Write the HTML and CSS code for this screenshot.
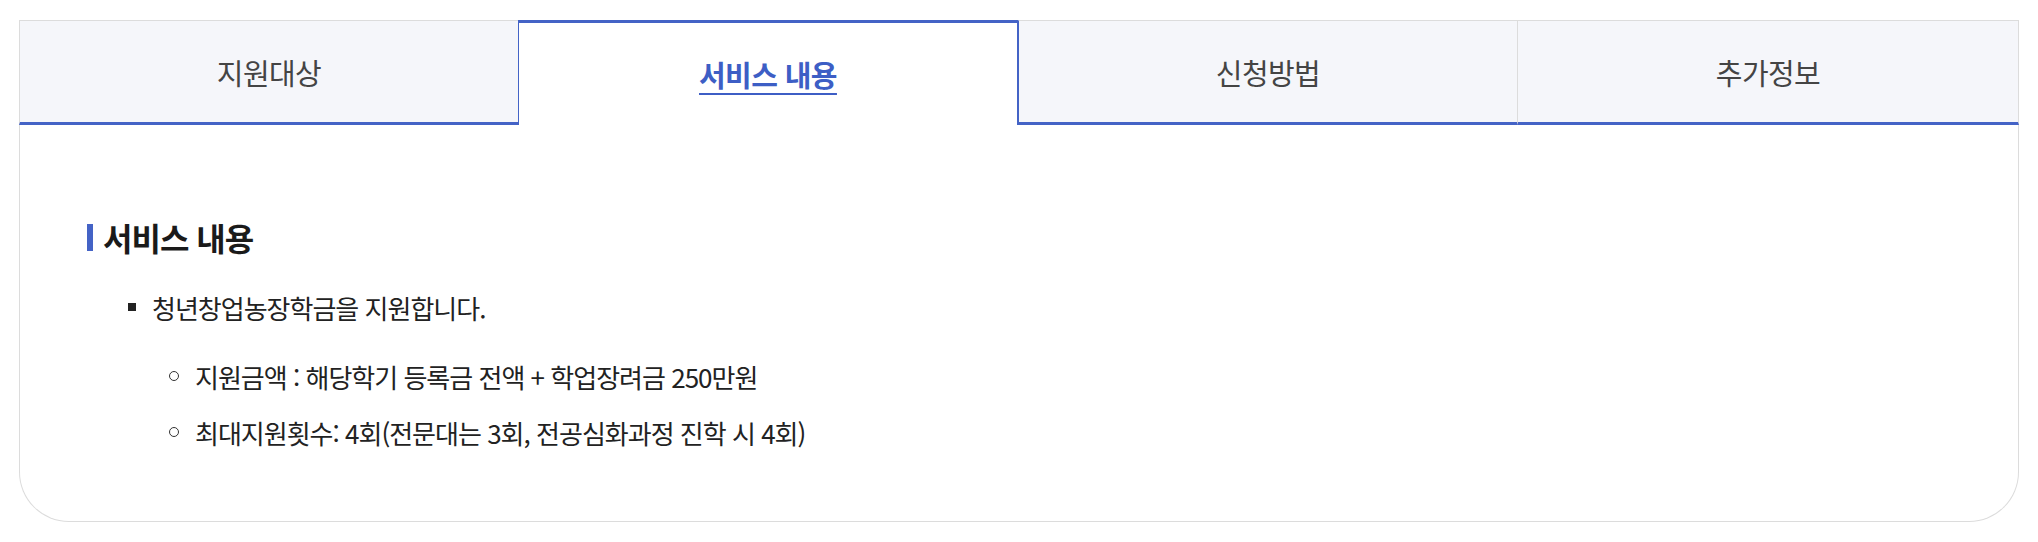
FILE: index.html
```html
<!DOCTYPE html>
<html lang="ko">
<head>
<meta charset="utf-8">
<title>서비스 내용</title>
<link rel="stylesheet" href="styles.css">
</head>
<body>
<div class="page">
  <div class="panel">
    <div class="tabs">
      <div class="tab">지원대상</div>
      <div class="tab active"><a href="#">서비스 내용</a></div>
      <div class="tab">신청방법</div>
      <div class="tab">추가정보</div>
    </div>
    <div class="content">
      <h2 class="heading"><span class="bar"></span>서비스 내용</h2>
      <ul class="list">
        <li class="item">
          <div class="line"><span class="sq"></span><span>청년창업농장학금을 지원합니다.</span></div>
          <ul class="sublist">
            <li class="subitem"><span class="circ"></span><span>지원금액 : 해당학기 등록금 전액 + 학업장려금 250만원</span></li>
            <li class="subitem"><span class="circ"></span><span>최대지원횟수: 4회(전문대는 3회, 전공심화과정 진학 시 4회)</span></li>
          </ul>
        </li>
      </ul>
    </div>
  </div>
</div>
</body>
</html>
```

FILE: styles.css
```css
* { box-sizing: border-box; }
html, body { margin: 0; padding: 0; background: #fff; }
body { font-family: "Noto Sans CJK KR", "Noto Sans", sans-serif; color: #1e1e1e; }
.page { padding: 20px 0 0 19px; }
.panel {
  width: 2000px;
  height: 502px;
  border: 1px solid #dcdcdc;
  border-top: none;
  border-radius: 0 0 50px 50px;
}
.tabs {
  display: grid;
  grid-template-columns: 499px 500px 499px 1fr;
  height: 105px;
  margin: 0 -1px;
}
.tab {
  display: flex;
  align-items: center;
  justify-content: center;
  background: #f5f6fa;
  border-top: 1px solid #dcdcdc;
  border-left: 1px solid #dcdcdc;
  border-bottom: 3px solid #4463c6;
  font-size: 29px;
  letter-spacing: -0.6px;
  color: #444;
}
.tab:last-child { border-right: 1px solid #dcdcdc; }
.tab.active {
  background: #fff;
  border: 1px solid #4463c6;
  border-top: 3px solid #4463c6;
  border-bottom: none;
  font-weight: 700;
}
.tab.active + .tab { border-left: 1px solid #4463c6; }
.tab.active a { color: #3d5ec5; text-decoration: underline; text-underline-offset: 6px; text-decoration-thickness: 2px; }
.content { padding: 92px 0 0 67px; }
.heading {
  display: flex;
  align-items: center;
  margin: 0;
  height: 40px;
  font-size: 32px;
  font-weight: 700;
  letter-spacing: -1px;
  color: #1a1a1a;
}
.bar { width: 6px; height: 27px; background: #4463c6; margin-right: 10px; }
.list { list-style: none; margin: 32px 0 0; padding: 0 0 0 41px; }
.line, .subitem {
  display: flex;
  align-items: center;
  height: 36px;
  font-size: 26px;
  letter-spacing: -1px;
  color: #222;
}
.sq { width: 8px; height: 8px; background: #222; margin-right: 16px; flex: none; }
.sublist { list-style: none; margin: 33px 0 0; padding: 0 0 0 41px; display: flex; flex-direction: column; gap: 20px; }
.circ { width: 10px; height: 10px; border: 1.5px solid #333; border-radius: 50%; margin-right: 16px; flex: none; }
```
